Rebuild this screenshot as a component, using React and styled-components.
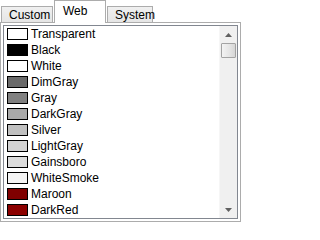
import React from 'react';
import styled, { createGlobalStyle } from 'styled-components';

const Global = createGlobalStyle`
  html, body {
    margin: 0;
    padding: 0;
    background: #ffffff;
  }
  body {
    font-family: "Liberation Sans", Arial, sans-serif;
    font-size: 12px;
    color: #000000;
  }
`;

const colors = [
  { name: 'Transparent', value: '#ffffff' },
  { name: 'Black', value: '#000000' },
  { name: 'White', value: '#ffffff' },
  { name: 'DimGray', value: '#696969' },
  { name: 'Gray', value: '#808080' },
  { name: 'DarkGray', value: '#a9a9a9' },
  { name: 'Silver', value: '#c0c0c0' },
  { name: 'LightGray', value: '#d3d3d3' },
  { name: 'Gainsboro', value: '#dcdcdc' },
  { name: 'WhiteSmoke', value: '#f5f5f5' },
  { name: 'Maroon', value: '#800000' },
  { name: 'DarkRed', value: '#8b0000' },
];

const tabs = [
  { label: 'Custom', width: 52 },
  { label: 'Web', width: 52 },
  { label: 'System', width: 46 },
];

const Picker = styled.div`
  width: 241px;
  height: 222px;
  display: flex;
  flex-direction: column;
`;

const TabStrip = styled.div`
  display: flex;
  align-items: flex-end;
  height: 22px;
  padding-left: 1px;
  gap: 1px;
`;

const Tab = styled.div`
  position: relative;
  z-index: 1;
  box-sizing: border-box;
  width: ${(p) => p.$width}px;
  height: ${(p) => (p.$active ? 23 : 16)}px;
  margin-bottom: ${(p) => (p.$active ? -1 : 0)}px;
  padding: ${(p) => (p.$active ? '3px 0 0 8px' : '1px 0 0 7px')};
  border: 1px solid #acacac;
  border-bottom: none;
  background: ${(p) =>
    p.$active ? '#ffffff' : 'linear-gradient(#f0f0f0, #e5e5e5)'};
  line-height: 15px;
`;

const Panel = styled.div`
  flex: 1;
  box-sizing: border-box;
  border: 1px solid #acacac;
  background: #ffffff;
  padding: 2px;
  display: flex;
  min-height: 0;
`;

const ListBox = styled.div`
  flex: 1;
  box-sizing: border-box;
  border: 1px solid #828790;
  display: flex;
  min-height: 0;
  overflow: hidden;
`;

const Items = styled.div`
  flex: 1;
  overflow: hidden;
  padding-top: 1px;
`;

const Row = styled.div`
  display: flex;
  align-items: flex-start;
  height: 16px;
  padding-left: 3px;
`;

const Swatch = styled.span`
  box-sizing: border-box;
  width: 21px;
  height: 12px;
  margin-top: 1px;
  border: 1px solid #000000;
  background: ${(p) => p.$color};
`;

const Label = styled.span`
  margin-left: 3px;
  line-height: 15px;
`;

const ScrollBar = styled.div`
  width: 17px;
  background: #f0f0f0;
  border-left: 1px solid #f6f6f6;
  display: flex;
  flex-direction: column;
`;

const ArrowButton = styled.div`
  height: 17px;
  display: flex;
  align-items: center;
  justify-content: center;
`;

const Track = styled.div`
  flex: 1;
  padding: 0 1px;
`;

const Thumb = styled.div`
  box-sizing: border-box;
  height: 15px;
  border: 1px solid #a3a3a3;
  border-radius: 1px;
  background: linear-gradient(to right, #f3f3f3, #e4e4e4 60%, #d6d6d6);
`;

const Arrow = ({ down }) => (
  <svg width="7" height="4" viewBox="0 0 7 4">
    <path
      d={down ? 'M0 0H7L3.5 4Z' : 'M3.5 0L7 4H0Z'}
      fill="#606060"
    />
  </svg>
);

export default function App() {
  return (
    <>
      <Global />
      <Picker>
        <TabStrip>
          {tabs.map((t) => (
            <Tab key={t.label} $width={t.width} $active={t.label === 'Web'}>
              {t.label}
            </Tab>
          ))}
        </TabStrip>
        <Panel>
          <ListBox>
            <Items>
              {colors.map((c) => (
                <Row key={c.name}>
                  <Swatch $color={c.value} />
                  <Label>{c.name}</Label>
                </Row>
              ))}
            </Items>
            <ScrollBar>
              <ArrowButton>
                <Arrow />
              </ArrowButton>
              <Track>
                <Thumb />
              </Track>
              <ArrowButton>
                <Arrow down />
              </ArrowButton>
            </ScrollBar>
          </ListBox>
        </Panel>
      </Picker>
    </>
  );
}
